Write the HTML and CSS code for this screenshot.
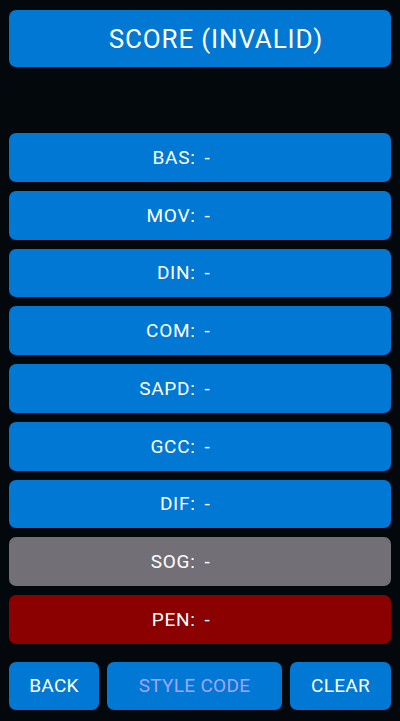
FILE: index.html
```html
<!DOCTYPE html>
<html>
<head>
<meta charset="utf-8">
<link rel="stylesheet" href="styles.css">
</head>
<body>
<div class="app">
  <div class="title">SCORE (INVALID)</div>
  <div class="rows">
    <div class="row"><span class="label">BAS:</span><span class="value">-</span></div>
    <div class="row"><span class="label">MOV:</span><span class="value">-</span></div>
    <div class="row"><span class="label">DIN:</span><span class="value">-</span></div>
    <div class="row"><span class="label">COM:</span><span class="value">-</span></div>
    <div class="row"><span class="label">SAPD:</span><span class="value">-</span></div>
    <div class="row"><span class="label">GCC:</span><span class="value">-</span></div>
    <div class="row"><span class="label">DIF:</span><span class="value">-</span></div>
    <div class="row gray"><span class="label">SOG:</span><span class="value">-</span></div>
    <div class="row red"><span class="label">PEN:</span><span class="value">-</span></div>
  </div>
  <div class="actions">
    <div class="btn back">BACK</div>
    <div class="btn style">STYLE CODE</div>
    <div class="btn clear">CLEAR</div>
  </div>
</div>
</body>
</html>
```
FILE: styles.css
```css
html, body {
  margin: 0;
  padding: 0;
  background: #02080c;
  height: 100%;
}
.app {
  box-sizing: border-box;
  height: 721px;
  padding: 10px 9px 0 9px;
  display: flex;
  flex-direction: column;
  font-family: Roboto, "Liberation Sans", sans-serif;
  color: #fff;
}
.title {
  height: 57px;
  background: #0078d4;
  border-radius: 7px;
  display: flex;
  align-items: center;
  justify-content: center;
  padding-left: 32px;
  font-size: 26px;
  letter-spacing: 0.85px;
  flex: none;
}
.rows {
  margin-top: 66px;
  display: flex;
  flex-direction: column;
  gap: 9px;
}
.row {
  height: 48.75px;
  background: #0078d4;
  border-radius: 7px;
  display: flex;
  align-items: center;
  font-size: 19px;
  letter-spacing: 0.7px;
  gap: 9px;
}
.row.gray { background: #727076; }
.row.red { background: #8b0000; }
.label {
  flex: 1;
  text-align: right;
}
.value {
  flex: 1;
  text-align: left;
}
.actions {
  margin-top: 18px;
  display: flex;
  gap: 8px;
  height: 48px;
}
.btn {
  background: #0078d4;
  border-radius: 7px;
  display: flex;
  align-items: center;
  justify-content: center;
  font-size: 19px;
  letter-spacing: 0.3px;
}
.back { width: 90px; }
.style { width: 175px; color: #a4a4f4; }
.clear { flex: 1; }
```
